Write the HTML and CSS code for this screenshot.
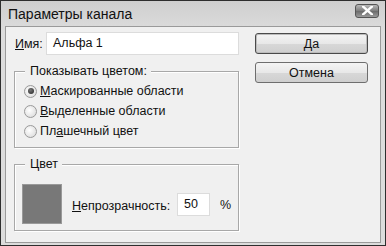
FILE: index.html
```html
<!DOCTYPE html>
<html lang="ru">
<head>
    <meta charset="UTF-8">
    <title>Параметры канала</title>
    <link rel="stylesheet" href="styles.css">
</head>
<body>
    <div class="window">
        <div class="titlebar">
            <span class="title">Параметры канала</span>
            <span class="close">
                <svg viewBox="0 0 10 8" width="11" height="9">
                    <path d="M1 0.5 L9 7.5 M9 0.5 L1 7.5" stroke="#fff" stroke-width="2.2" stroke-linecap="square"></path>
                </svg>
            </span>
        </div>

        <div class="client">
            <div class="main">
                <div class="name-row">
                    <label class="label"><u>И</u>мя:</label>
                    <div class="field">Альфа 1</div>
                </div>

                <!-- Показывать цветом -->
                <div class="group group-show">
                    <span class="legend">Показывать цветом:</span>
                    <div class="radio-row">
                        <span class="radio checked"></span>
                        <span><u>М</u>аскированные области</span>
                    </div>
                    <div class="radio-row">
                        <span class="radio"></span>
                        <span><u>В</u>ыделенные области</span>
                    </div>
                    <div class="radio-row">
                        <span class="radio"></span>
                        <span>Пл<u>а</u>шечный цвет</span>
                    </div>
                </div>

                <!-- Цвет -->
                <div class="group group-color">
                    <span class="legend">Цвет</span>
                    <div class="color-row">
                        <div class="swatch"></div>
                        <span class="opacity-label"><u>Н</u>епрозрачность:</span>
                        <div class="field field-small">50</div>
                        <span class="percent">%</span>
                    </div>
                </div>
            </div>

            <div class="buttons">
                <button class="button default">Да</button>
                <button class="button">Отмена</button>
            </div>
        </div>
    </div>
</body>
</html>
```

FILE: styles.css
```css
body {
    margin: 0;
    background: #3a3a3a;
    font-family: Tahoma, "DejaVu Sans", sans-serif;
}

.window {
    width: 384px;
    height: 244px;
    border: 1px solid #2e2e2e;
    background: linear-gradient(#cfcfcf, #dcdcdc 30px);
    display: flex;
    flex-direction: column;
}

.titlebar {
    height: 25px;
    display: flex;
    align-items: center;
    justify-content: space-between;
    padding: 0 6px 0 7px;
}

.title {
    font-family: "Liberation Sans", Arial, sans-serif;
    font-size: 14px;
    color: #111;
    margin-top: 1px;
}

.close {
    width: 22px;
    height: 12px;
    margin-top: -6px;
    border: 1px solid #555;
    border-radius: 3px;
    background: linear-gradient(#b9b9b9, #7b7b7b 50%, #6a6a6a 51%, #9a9a9a);
    display: flex;
    align-items: center;
    justify-content: center;
}

.client {
    flex: 1;
    margin: 0 4px 2px 4px;
    border: 1px solid #9a9a9a;
    background: #f0f0f0;
    display: flex;
    gap: 16px;
    padding: 5px 12px 0 8px;
    font-family: "Liberation Sans", Arial, sans-serif;
    font-size: 12.5px;
    color: #111;
}

.main {
    width: 227px;
    display: flex;
    flex-direction: column;
}

.name-row {
    display: flex;
    align-items: center;
    margin-bottom: 16px;
}

.label {
    width: 31px;
    padding-left: 1px;
}

.field {
    flex: 1;
    height: 21px;
    line-height: 21px;
    background: #fff;
    border: 1px solid #dcdcdc;
    padding-left: 6px;
}

.group {
    position: relative;
    box-sizing: border-box;
    border: 1px solid #a8a8a8;
    box-shadow: 1px 1px 0 #fff, inset 1px 1px 0 #fff;
}

.legend {
    position: absolute;
    top: -8px;
    left: 10px;
    padding: 0 4px 0 5px;
    background: #f0f0f0;
    line-height: 15px;
}

.group-show {
    height: 77px;
    padding: 9px 0 0 9px;
    margin-bottom: 16px;
}

.radio-row {
    display: flex;
    align-items: center;
    gap: 3px;
    height: 20px;
}

.radio {
    width: 11px;
    height: 11px;
    border-radius: 50%;
    border: 1px solid #9a9a9a;
    background: radial-gradient(circle at 40% 40%, #ffffff, #d6d6d6);
    display: flex;
    align-items: center;
    justify-content: center;
}

.radio.checked::after {
    content: "";
    width: 6px;
    height: 6px;
    border-radius: 50%;
    background: radial-gradient(circle at 40% 35%, #777, #222);
}

.group-color {
    height: 67px;
    padding: 19px 0 0 7px;
}

.color-row {
    display: flex;
    align-items: center;
}

.swatch {
    width: 38px;
    height: 38px;
    background: #787878;
    border: 1px solid #999;
    margin-right: 10px;
}

.opacity-label {
    width: 105px;
    margin-top: 3px;
}

.field-small {
    flex: none;
    width: 25px;
    margin-right: 10px;
}

.percent {
    margin-top: 2px;
}

.buttons {
    display: flex;
    flex-direction: column;
    gap: 8px;
    width: 114px;
    padding-top: 1px;
}

.button {
    height: 21px;
    font-family: "Liberation Sans", Arial, sans-serif;
    font-size: 12.5px;
    color: #111;
    border: 1px solid #6e6e6e;
    border-radius: 3px;
    background: linear-gradient(#f4f4f4, #e8e8e8 50%, #d8d8d8 51%, #cfcfcf);
    padding: 0;
}

.button.default {
    border-color: #4a4a4a;
    box-shadow: inset 0 0 0 1px #bdbdbd;
}
```
